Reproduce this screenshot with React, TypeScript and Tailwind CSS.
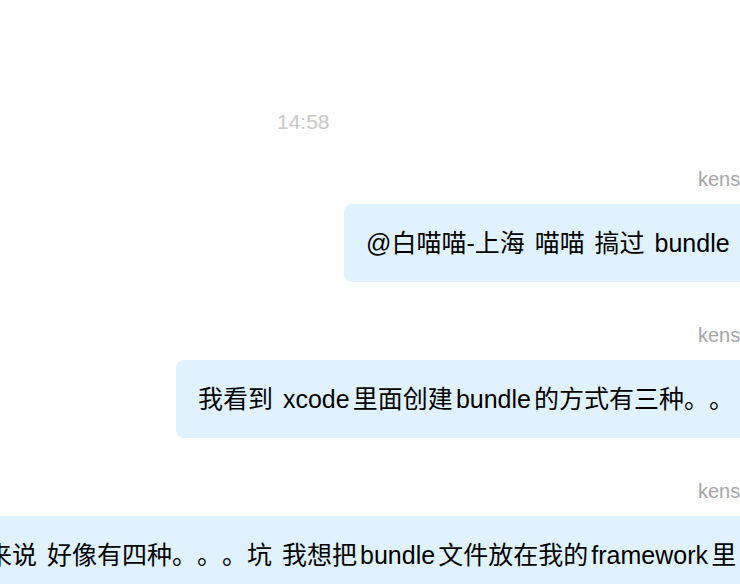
type Message = {
  name: string;
  text: string;
  offset: string;
};

const messages: Message[] = [
  { name: "kenshin", text: "@白喵喵-上海 喵喵 搞过 bundle 吗", offset: "ml-[344px]" },
  { name: "kenshin", text: "我看到 xcode里面创建bundle的方式有三种。。", offset: "ml-[176px]" },
  {
    name: "kenshin",
    text: "来说 好像有四种。。。坑 我想把bundle文件放在我的framework里",
    offset: "ml-[-35px]",
  },
];

export default function App() {
  return (
    <div className="h-[584px] w-[740px] overflow-hidden bg-white font-['Liberation_Sans','Noto_Sans_CJK_SC',sans-serif]">
      <div className="flex w-[1200px] flex-col pt-[110px]">
        <div className="pl-[277px] text-[21px] leading-[24px] text-[#c8c8c8]">14:58</div>
        <div className="mt-[33px] flex flex-col gap-[41px]">
          {messages.map((m, i) => (
            <div key={i} className="flex flex-col">
              <div className="pl-[698px] text-[20px] leading-[24px] text-[#a6a6a6]">{m.name}</div>
              <div className={`mt-[13px] flex ${m.offset}`}>
                <div className="flex h-[78px] items-center whitespace-nowrap rounded-lg bg-[#dff2fd] pl-[22px] pr-[40px] text-[25px] leading-[34px] text-black [text-autospace:normal] [text-spacing-trim:space-all] [word-spacing:3px]">
                  {m.text}
                </div>
              </div>
            </div>
          ))}
        </div>
      </div>
    </div>
  );
}
